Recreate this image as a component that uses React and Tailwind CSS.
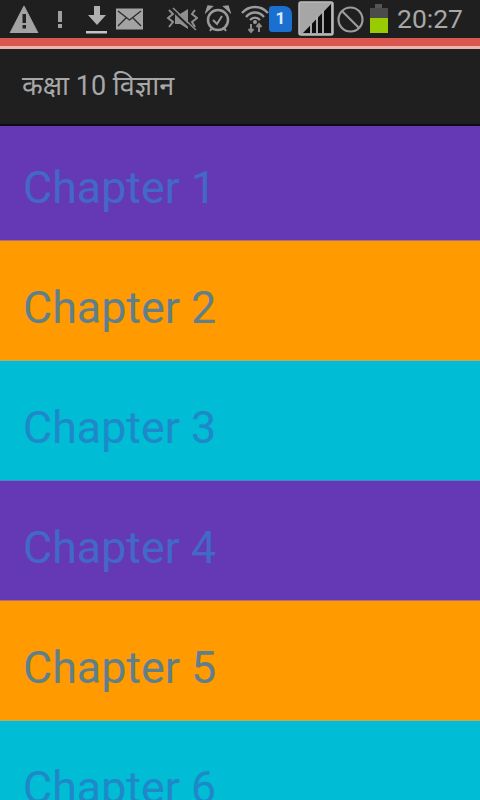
import React from 'react';

const chapters = [
  { id: 1, bg: 'bg-[#6539b5]', text: 'text-[#4269c6]', height: 'h-[115px] pt-[10px]', divider: 'border-[#a8707a]' },
  { id: 2, bg: 'bg-[#ff9a00]', text: 'text-[#5f7f8c]', height: 'h-[120px] pt-[14px]', divider: 'border-[#b8ac66]' },
  { id: 3, bg: 'bg-[#00bcd4]', text: 'text-[#1f88c8]', height: 'h-[120px] pt-[14px]', divider: 'border-[#4a86c6]' },
  { id: 4, bg: 'bg-[#6539b5]', text: 'text-[#4269c6]', height: 'h-[120px] pt-[14px]', divider: 'border-[#a8707a]' },
  { id: 5, bg: 'bg-[#ff9a00]', text: 'text-[#5f7f8c]', height: 'h-[120px] pt-[14px]', divider: 'border-[#b8ac66]' },
  { id: 6, bg: 'bg-[#00bcd4]', text: 'text-[#1f88c8]', height: 'h-[120px] pt-[14px]', divider: 'border-[#4a86c6]' },
];

const StatusIcons = () => (
  <>
    {/* warning */}
    <svg width="30" height="30" viewBox="0 0 30 30" className="ml-[9px] -mt-[2px] shrink-0">
      <path d="M15 3 L29 30 H1 Z" fill="#a3a3a3" stroke="#a3a3a3" strokeLinejoin="round" />
      <rect x="13.5" y="11" width="3.5" height="9" fill="#222" />
      <rect x="13.5" y="22" width="3.5" height="3.5" fill="#222" />
    </svg>
    {/* exclamation */}
    <svg width="8" height="20" viewBox="0 0 8 20" className="ml-[17px] shrink-0">
      <rect x="2" y="2" width="4" height="11" fill="#a0a0a0" />
      <rect x="2" y="15" width="4" height="4" fill="#a0a0a0" />
    </svg>
    {/* download */}
    <svg width="24" height="30" viewBox="0 0 24 30" className="ml-[21px] shrink-0">
      <path d="M9 2 H15 V11 H21 L12 21 L3 11 H9 Z" fill="#b0b0b0" />
      <rect x="1" y="27" width="21" height="2.5" fill="#c4c4c4" />
    </svg>
    {/* mail */}
    <svg width="27" height="22" viewBox="0 0 27 22" className="ml-[7px] shrink-0">
      <rect width="27" height="21" y="0.5" fill="#a3a3a3" />
      <path d="M2 3 L13.5 12 L25 3 M2 18 L10 10 M25 18 L17 10" stroke="#2a2a2a" strokeWidth="1.3" fill="none" />
    </svg>
    {/* muted vibrate */}
    <svg width="32" height="24" viewBox="0 0 32 24" className="ml-[23px] shrink-0">
      <path d="M9 7 H14 L22 2 V22 L14 17 H9 Z" fill="#8f8f8f" />
      <path d="M3 3 L7 7 L2 11 L7 15 L3 20 M29 3 L26 7 L31 11 L26 15 L29 20" stroke="#8f8f8f" strokeWidth="2" fill="none" />
      <path d="M4 1 L27 23" stroke="#222" strokeWidth="2" />
      <path d="M7 1 L30 23" stroke="#8f8f8f" strokeWidth="1.5" />
    </svg>
    {/* alarm */}
    <svg width="26" height="28" viewBox="0 0 26 28" className="ml-[7px] shrink-0">
      <circle cx="13" cy="15" r="10" fill="none" stroke="#9a9a9a" strokeWidth="2.5" />
      <path d="M8 15 L12 19 L17 11" fill="none" stroke="#9a9a9a" strokeWidth="2" />
      <path d="M1 7 L7 1.5 L3 1 Z M25 7 L19 1.5 L23 1 Z" fill="#9a9a9a" stroke="#9a9a9a" strokeWidth="1.5" />
      <path d="M5 26 L7 23 M21 26 L19 23" stroke="#9a9a9a" strokeWidth="2" />
    </svg>
    {/* wifi */}
    <svg width="28" height="30" viewBox="0 0 28 30" className="ml-[10px] shrink-0">
      <path d="M1 9 C8 1 20 1 27 9 M5 13 C10 7 18 7 23 13 M9 16 C12 13 16 13 19 16" fill="none" stroke="#9c9c9c" strokeWidth="2.4" />
      <circle cx="14" cy="18" r="2" fill="#9c9c9c" />
      <path d="M10 20 V28 M7.5 25 L10 28 L12.5 25 M18 28 V20 M15.5 23 L18 20 L20.5 23" fill="none" stroke="#8a8a8a" strokeWidth="2" />
    </svg>
    {/* sim */}
    <div className="flex h-[26px] w-[23px] shrink-0 items-center justify-center rounded-[3px] rounded-tr-[8px] bg-[#1a6fd0] font-['Roboto',sans-serif] text-[17px] font-bold text-[#dcebff]">
      1
    </div>
    {/* signal */}
    <svg width="36" height="36" viewBox="0 0 36 36" className="ml-[6px] shrink-0">
      <rect x="1" y="1" width="34" height="33" rx="2" fill="#a6a6a6" stroke="#bdbdbd" strokeWidth="1.5" />
      <path d="M5 32 L33 3 V32 Z" fill="#0c0c0c" />
      <path d="M13 32 V23 M19 32 V16 M25 32 V10" stroke="#b5b5b5" strokeWidth="1.8" />
    </svg>
    {/* no service */}
    <svg width="27" height="27" viewBox="0 0 27 27" className="ml-[3px] shrink-0">
      <circle cx="13.5" cy="13.5" r="12" fill="none" stroke="#9c9c9c" strokeWidth="2.2" />
      <path d="M5 5 L22 22" stroke="#9c9c9c" strokeWidth="2.2" />
    </svg>
    {/* battery */}
    <svg width="20" height="30" viewBox="0 0 20 30" className="ml-[5px] shrink-0">
      <rect x="6" y="0" width="7" height="4" fill="#555" />
      <rect x="1" y="4" width="18" height="10" fill="#4b4b4b" />
      <rect x="1" y="14" width="18" height="15" fill="#99cc00" />
    </svg>
    <span className="ml-[8px] font-['Roboto',sans-serif] text-[26.5px] leading-none text-[#a8a8a8]">20:27</span>
  </>
);

export default function App() {
  return (
    <div className="h-[800px] w-[480px] overflow-hidden bg-[#1f1f1f] font-['Roboto','Noto_Sans',sans-serif]">
      {/* Status bar */}
      <div className="flex h-[38px] items-center bg-[#1f1f1f]">
        <StatusIcons />
      </div>
      <div className="h-[8px] bg-[#d9574f]" />
      <div className="h-[3px] bg-[#f0b0ac]" />

      {/* Action bar */}
      <div className="flex h-[77px] items-center border-b-2 border-[#0c0c12] pl-[22px] text-[27px] text-[#a8a8a8]">
        कक्षा 10 विज्ञान
      </div>

      {/* Chapter list */}
      {chapters.map(chapter => (
        <div key={chapter.id} className={`flex items-center border-b pl-[23px] text-[44.8px] ${chapter.bg} ${chapter.text} ${chapter.height} ${chapter.divider}`}>
          Chapter {chapter.id}
        </div>
      ))}
    </div>
  );
}
